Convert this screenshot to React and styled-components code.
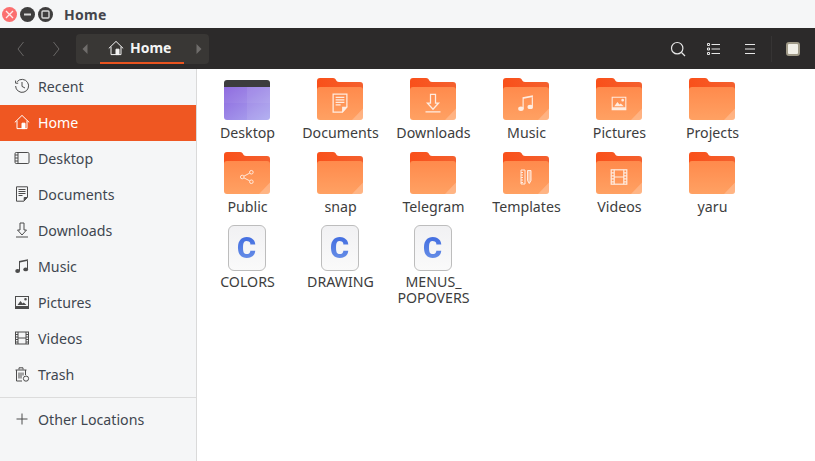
import React from 'react';
import styled, { createGlobalStyle } from 'styled-components';

const GlobalStyle = createGlobalStyle`
  html, body {
    margin: 0;
    height: 100%;
    overflow: hidden;
  }
  body {
    font-family: 'Noto Sans', 'Open Sans', sans-serif;
    background: #ffffff;
  }
`;

const Window = styled.div`
  width: 815px;
  height: 461px;
  display: flex;
  flex-direction: column;
`;

const TitleBar = styled.div`
  height: 28px;
  flex: none;
  display: flex;
  align-items: center;
  background: #f5f6f7;
  padding-left: 2px;
`;

const WindowButton = styled.span`
  width: 15px;
  height: 15px;
  margin-right: 3px;
  border-radius: 50%;
  display: flex;
  align-items: center;
  justify-content: center;
  background: ${p => (p.$close ? '#fb6f6f' : '#3f3e3e')};
  color: ${p => (p.$close ? '#ffe9e9' : '#d8d8d8')};
`;

const WindowTitle = styled.span`
  margin-left: 8px;
  font-size: 14px;
  font-weight: 700;
  letter-spacing: 0.3px;
  color: #45454c;
`;

const HeaderBar = styled.div`
  height: 41px;
  flex: none;
  display: flex;
  align-items: center;
  background: #2c2a2a;
  padding-right: 15px;
`;

const NavButton = styled.span`
  width: 35px;
  display: flex;
  justify-content: center;
  color: #696766;
`;

const NavGroup = styled.div`
  display: flex;
  margin-left: 3px;
  margin-right: 3px;
`;

const PathBar = styled.div`
  width: 133px;
  height: 30px;
  display: flex;
  align-items: center;
  justify-content: space-between;
  padding: 0 7px 0 6px;
  box-sizing: border-box;
  border-radius: 4px;
  background: #393735;
  color: #6f6d6b;
`;

const PathCrumb = styled.div`
  width: 84px;
  height: 30px;
  box-sizing: border-box;
  display: flex;
  align-items: center;
  gap: 6px;
  padding-left: 8px;
  border-bottom: 2px solid #e95420;
  color: #f4f4f4;
  font-size: 14px;
  font-weight: 700;
`;

const HeaderTools = styled.div`
  margin-left: auto;
  display: flex;
  align-items: center;
  color: #e6e6e6;
`;

const ToolButton = styled.span`
  width: 36px;
  display: flex;
  justify-content: center;
`;

const ToolDivider = styled.span`
  width: 1px;
  height: 26px;
  margin: 0 14px 0 3px;
  background: #363434;
`;

const AppSwatch = styled.span`
  width: 14px;
  height: 14px;
  box-sizing: border-box;
  border: 2px solid #a09a88;
  border-radius: 3px;
  background: #f2f0e8;
`;

const Body = styled.div`
  flex: 1;
  display: flex;
  min-height: 0;
`;

const Sidebar = styled.nav`
  width: 196px;
  flex: none;
  background: #f5f6f7;
  border-right: 1px solid #dadada;
`;

const SideRow = styled.div`
  height: 36px;
  box-sizing: border-box;
  padding: 0 0 2px 14px;
  margin-top: ${p => (p.$footer ? '4px' : '0')};
  display: flex;
  align-items: center;
  gap: 8px;
  font-size: 14.2px;
  color: ${p => (p.$active ? '#ffffff' : '#3f4650')};
  background: ${p => (p.$active ? '#ef5722' : 'transparent')};

  svg {
    color: ${p => (p.$active ? '#ffffff' : '#4c4c4c')};
  }
`;

const SideDivider = styled.div`
  height: 1px;
  margin-top: 4px;
  background: #dcdcdc;
`;

const FileGrid = styled.main`
  flex: 1;
  display: grid;
  grid-template-columns: repeat(6, 93px);
  grid-auto-rows: min-content;
  padding: 5px 0 0 3px;
`;

const FileItem = styled.div`
  height: ${p => (p.$tall ? 'auto' : '74px')};
  display: flex;
  flex-direction: column;
  align-items: center;
`;

const FileLabel = styled.span`
  margin-top: ${p => (p.$tall ? '3px' : '2px')};
  width: 93px;
  box-sizing: border-box;
  padding-left: 2px;
  text-align: center;
  font-size: 14.2px;
  line-height: ${p => (p.$tall ? '16px' : '17px')};
  color: #3d3d3d;
`;

const SourceIcon = styled.div`
  width: 38px;
  height: 46px;
  margin-top: 3px;
  box-sizing: border-box;
  display: flex;
  align-items: center;
  justify-content: center;
  border: 1px solid #bdbdbd;
  border-radius: 6px;
  background: linear-gradient(#f1f1f3, #fafafa);
`;

const SourceLetter = styled.span`
  font-family: Roboto, 'Noto Sans', sans-serif;
  font-size: 29px;
  line-height: 34px;
  font-weight: 900;
  color: transparent;
  background: linear-gradient(#3a66df, #7096e8);
  -webkit-background-clip: text;
  background-clip: text;
`;

const stroke = { fill: 'none', stroke: 'currentColor', strokeWidth: 1 };

// 16x16 symbols, used in the sidebar and as folder emblems
const glyphs = {
  recent: (
    <g {...stroke}>
      <path d="M3.2 3.6A6.5 6.5 0 1 1 1.6 8" />
      <path d="M1.6 2.6v2.6h2.6M8 4v4.4l3 1.6" />
    </g>
  ),
  home: (
    <g {...stroke}>
      <path d="M.8 8.4 8 1.4l7.2 7M3 6.600v8h10v-8" />
      <path d="M8 9.200h3v5.400H8z" fill="currentColor" />
    </g>
  ),
  desktop: (
    <g {...stroke}>
      <rect x="1" y="2.500" width="14" height="11" rx="1.200" />
      <path d="M4 2.500v11M1 5h3M1 8h3M1 11h3" />
    </g>
  ),
  documents: (
    <g {...stroke}>
      <path d="M2.500.8h11v10.400l-3.600 4H2.500z" />
      <path d="M4.500 3.500h7M4.500 5.500h7M4.500 7.500h7M4.500 9.500h4" />
      <path d="M13 11.500H10.200v3z" fill="currentColor" />
    </g>
  ),
  downloads: (
    <g {...stroke}>
      <path d="M6 1h4v7h2.500L8 13 3.500 8H6zM2 15h12" />
    </g>
  ),
  music: (
    <g>
      <path d="M5 3 14 1.200v1.600L6 4.400V13H5zM13 1.500h1V11h-1z" fill="currentColor" />
      <ellipse cx="3.600" cy="13" rx="2.400" ry="1.900" fill="currentColor" />
      <ellipse cx="11.700" cy="11.400" rx="2.400" ry="1.900" fill="currentColor" />
    </g>
  ),
  pictures: (
    <g>
      <path
        d="M1 2h14v13H1zM2 3v9h12V3zM3.500 11l3-4 2 2.400 1.200-1L12.500 11zM11.500 4a1.200 1.200 0 1 1 0 2.600 1.200 1.200 0 0 1 0-2.600z"
        fill="currentColor"
        fillRule="evenodd"
      />
    </g>
  ),
  videos: (
    <g {...stroke}>
      <rect x="1.500" y="2" width="13" height="12" />
      <path d="M4 2v12M12 2v12M4 8h8M1.500 4.500H4M1.500 7H4M1.500 9.500H4M1.500 12H4M12 4.500h2.500M12 7h2.500M12 9.500h2.500M12 12h2.500" />
    </g>
  ),
  trash: (
    <g {...stroke}>
      <path d="M1.500 4h11M5 3.500V1.800h4v1.700M2.500 4v11H8M11.500 4v5" />
      <path d="M5 6.500v6M7 6.500v6M9 6.500v3" />
      <circle cx="12" cy="12.600" r="2.600" />
    </g>
  ),
  plus: (
    <g {...stroke}>
      <path d="M8 2.500v11M2.500 8h11" />
    </g>
  ),
  share: (
    <g {...stroke}>
      <circle cx="3" cy="8" r="1.900" />
      <circle cx="12.600" cy="3" r="1.900" />
      <circle cx="12.600" cy="13" r="1.900" />
      <path d="m4.800 7.100 6.100-3.200M4.800 8.900l6.100 3.200" />
    </g>
  ),
  templates: (
    <g {...stroke}>
      <path d="M3 1h4v14H3zM3 3.500h2M3 6h2M3 8.500h2M3 11h2M3 13.500h2" />
      <path d="M9.500 1.500h3.500v10l-1.750 3-1.750-3z" fill="currentColor" fillOpacity=".5" />
    </g>
  ),
};

const Glyph = ({ name, size = 16 }) => (
  <svg width={size} height={size} viewBox="0 0 16 16">
    {glyphs[name]}
  </svg>
);

const Folder = ({ emblem, emblemScale = 1.1 }) => (
  <svg width="48" height="48" viewBox="0 0 48 48">
    <defs>
      <linearGradient id="folderFront" x1="0" y1="0" x2="0" y2="1">
        <stop offset="0" stopColor="#ff8a4c" />
        <stop offset="1" stopColor="#ffa163" />
      </linearGradient>
      <linearGradient id="folderBack" x1="0" y1="0" x2="1" y2="0">
        <stop offset="0" stopColor="#f9501a" />
        <stop offset="1" stopColor="#f4602e" />
      </linearGradient>
    </defs>
    <path
      d="M1 7a3 3 0 0 1 3-3h13c2 0 2.500 1 3 2 .5 1 1.500 2 3 2h21a3 3 0 0 1 3 3v9H1z"
      fill="url(#folderBack)"
    />
    <path
      d="M1 16a3 3 0 0 1 3-3h40a3 3 0 0 1 3 3v27a3 3 0 0 1-3 3H4a3 3 0 0 1-3-3z"
      fill="url(#folderFront)"
    />
    <path d="M47 34.500V43a3 3 0 0 1-3 3h-8z" fill="#ffffff" fillOpacity=".22" />
    {emblem && (
      <g
        transform={`translate(24 29) scale(${emblemScale}) translate(-8 -8)`}
        color="#ffffff"
        opacity=".82"
      >
        {glyphs[emblem]}
      </g>
    )}
  </svg>
);

const DesktopFolder = () => (
  <svg width="48" height="48" viewBox="0 0 48 48">
    <defs>
      <linearGradient id="desktopFront" x1="0" y1="0" x2="1" y2="1">
        <stop offset="0" stopColor="#8b65de" />
        <stop offset="1" stopColor="#aeabf0" />
      </linearGradient>
    </defs>
    <path d="M1 9a3 3 0 0 1 3-3h40a3 3 0 0 1 3 3v4H1z" fill="#3c3c3e" />
    <path d="M1 13h46v30a3 3 0 0 1-3 3H4a3 3 0 0 1-3-3z" fill="url(#desktopFront)" />
    <path d="M24 13h23v30a3 3 0 0 1-3 3H24z" fill="#ffffff" fillOpacity=".08" />
    <path d="M1 13h46v16H1z" fill="#ffffff" fillOpacity=".05" />
  </svg>
);

const Chevron = ({ dir }) => (
  <svg width="10" height="16" viewBox="0 0 10 16" fill="none" stroke="currentColor">
    <path d={dir === 'left' ? 'M7.500 1 2 8l5.500 7' : 'M2.500 1 8 8l-5.500 7'} />
  </svg>
);

const Caret = ({ dir }) => (
  <svg width="6" height="10" viewBox="0 0 6 10" fill="currentColor">
    <path d={dir === 'left' ? 'M5.500 0v10L.5 5z' : 'M.5 0v10l5-5z'} />
  </svg>
);

const sidebarItems = [
  ['recent', 'Recent'],
  ['home', 'Home'],
  ['desktop', 'Desktop'],
  ['documents', 'Documents'],
  ['downloads', 'Downloads'],
  ['music', 'Music'],
  ['pictures', 'Pictures'],
  ['videos', 'Videos'],
  ['trash', 'Trash'],
];

const folders = [
  ['Documents', 'documents', 1.25],
  ['Downloads', 'downloads', 1.25],
  ['Music', 'music', 1.15],
  ['Pictures', 'pictures', 1.05],
  ['Projects'],
  ['Public', 'share', 0.95],
  ['snap'],
  ['Telegram'],
  ['Templates', 'templates', 1],
  ['Videos', 'videos', 1.2],
  ['yaru'],
];

const sources = [['COLORS'], ['DRAWING'], ['MENUS_', 'POPOVERS']];

const App = () => (
  <Window>
    <GlobalStyle />
    <TitleBar>
      <WindowButton $close>
        <svg width="9" height="9" viewBox="0 0 9 9" stroke="currentColor" strokeWidth="1.400">
          <path d="m1 1 7 7M8 1 1 8" />
        </svg>
      </WindowButton>
      <WindowButton>
        <svg width="9" height="9" viewBox="0 0 9 9" stroke="currentColor" strokeWidth="2">
          <path d="M1 4.500h7" />
        </svg>
      </WindowButton>
      <WindowButton>
        <svg width="9" height="9" viewBox="0 0 9 9" stroke="currentColor" strokeWidth="1.400" fill="none">
          <rect x="1" y="1" width="7" height="7" rx="1" />
        </svg>
      </WindowButton>
      <WindowTitle>Home</WindowTitle>
    </TitleBar>
    <HeaderBar>
      <NavGroup>
        <NavButton>
          <Chevron dir="left" />
        </NavButton>
        <NavButton>
          <Chevron dir="right" />
        </NavButton>
      </NavGroup>
      <PathBar>
        <Caret dir="left" />
        <PathCrumb>
          <Glyph name="home" />
          Home
        </PathCrumb>
        <Caret dir="right" />
      </PathBar>
      <HeaderTools>
        <ToolButton>
          <svg width="16" height="16" viewBox="0 0 16 16" fill="none" stroke="currentColor" strokeWidth="1.200">
            <circle cx="7.200" cy="7.200" r="5.700" />
            <path d="m11.500 11.500 3.500 3.500" />
          </svg>
        </ToolButton>
        <ToolButton>
          <svg width="14" height="14" viewBox="0 0 14 14" fill="none" stroke="currentColor">
            <path d="M.5 1.500h2v2h-2zM.5 6h2v2h-2zM.5 10.500h2v2h-2zM4.500 2.500H13M4.500 7H13M4.500 11.500H13" />
          </svg>
        </ToolButton>
        <ToolButton>
          <svg width="12" height="12" viewBox="0 0 12 12" stroke="currentColor">
            <path d="M1 1.500h10M1 6h10M1 10.500h10" />
          </svg>
        </ToolButton>
        <ToolDivider />
        <AppSwatch />
      </HeaderTools>
    </HeaderBar>
    <Body>
      <Sidebar>
        {sidebarItems.map(([icon, label]) => (
          <SideRow key={label} $active={label === 'Home'}>
            <Glyph name={icon} />
            {label}
          </SideRow>
        ))}
        <SideDivider />
        <SideRow $footer>
          <Glyph name="plus" />
          Other Locations
        </SideRow>
      </Sidebar>
      <FileGrid>
        <FileItem>
          <DesktopFolder />
          <FileLabel>Desktop</FileLabel>
        </FileItem>
        {folders.map(([label, emblem, scale]) => (
          <FileItem key={label}>
            <Folder emblem={emblem} emblemScale={scale} />
            <FileLabel>{label}</FileLabel>
          </FileItem>
        ))}
        {sources.map(lines => (
          <FileItem key={lines[0]} $tall>
            <SourceIcon>
              <SourceLetter>C</SourceLetter>
            </SourceIcon>
            <FileLabel $tall>
              {lines.map(line => (
                <div key={line}>{line}</div>
              ))}
            </FileLabel>
          </FileItem>
        ))}
      </FileGrid>
    </Body>
  </Window>
);

export default App;
